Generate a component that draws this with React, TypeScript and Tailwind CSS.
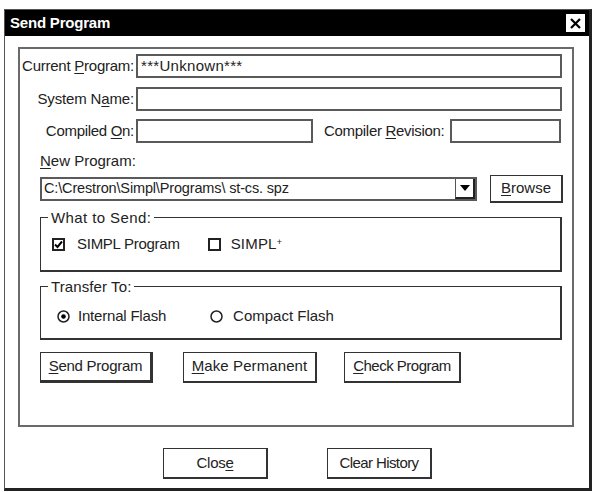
import React from "react";

const font = { fontFamily: '"Liberation Sans", Arial, sans-serif' };

function U({ children }: { children: React.ReactNode }) {
  return <span className="underline underline-offset-2">{children}</span>;
}

function Field({ className, children }: { className: string; children?: React.ReactNode }) {
  return (
    <div className={`h-[24px] border-2 border-[#5a5a5a] bg-white flex items-center px-[3px] text-[15px] text-[#222] ${className}`}>
      {children}
    </div>
  );
}

function Btn({ className, children, def }: { className: string; children: React.ReactNode; def?: boolean }) {
  return (
    <div
      className={`flex items-center justify-center bg-white text-[15px] text-[#222] border border-[#333] ${
        def ? "border-r-[3px] border-b-[3px]" : "border-r-2 border-b-2"
      } ${className}`}
    >
      {children}
    </div>
  );
}

export default function App() {
  return (
    <div className="w-[595px] h-[492px] bg-white overflow-hidden" style={font}>
      <div className="ml-[4px] mt-[9px] w-[588px] h-[482px] border border-[#555] border-r-[3px] border-r-[#222] border-b-[3px] border-b-[#222] flex flex-col">
        {/* title bar */}
        <div className="h-[26px] bg-black flex items-center justify-between pl-[5px] pr-[4px]">
          <span className="text-white font-bold text-[15px] tracking-[-0.2px]">Send Program</span>
          <div className="w-[19px] h-[18px] bg-white flex items-center justify-center">
            <svg width="11" height="11" viewBox="0 0 11 11">
              <path d="M1 1 L10 10 M10 1 L1 10" stroke="#000" strokeWidth="2.2" />
            </svg>
          </div>
        </div>

        {/* body */}
        <div className="flex flex-col pl-[13px] pt-[11px]">
          <div className="w-[556px] h-[380px] border-2 border-[#6a6a6a] flex flex-col pt-[5px]">
            {/* row 1 */}
            <div className="flex items-center h-[24px]">
              <div className="w-[114px] text-right text-[15px] text-[#222] tracking-[-0.25px] whitespace-nowrap">
                Current <U>P</U>rogram:
              </div>
              <Field className="ml-[2px] w-[426px]">
                <span className="tracking-[0.3px]">***Unknown***</span>
              </Field>
            </div>
            {/* row 2 */}
            <div className="flex items-center h-[24px] mt-[9px]">
              <div className="w-[114px] text-right text-[15px] text-[#222] tracking-[-0.15px] whitespace-nowrap">
                System N<U>a</U>me:
              </div>
              <Field className="ml-[2px] w-[426px]" />
            </div>
            {/* row 3 */}
            <div className="flex items-center h-[24px] mt-[8px]">
              <div className="w-[114px] text-right text-[15px] text-[#222] tracking-[-0.3px] whitespace-nowrap">
                Compiled <U>O</U>n:
              </div>
              <Field className="ml-[2px] w-[177px]" />
              <div className="ml-[11px] text-[15px] text-[#222] tracking-[-0.3px] whitespace-nowrap">
                Compiler <U>R</U>evision:
              </div>
              <Field className="ml-[5px] w-[111px]" />
            </div>

            {/* new program */}
            <div className="ml-[20px] mt-[7px] text-[15px] text-[#222]">
              <U>N</U>ew Program:
            </div>
            <div className="flex items-center ml-[20px] mt-[2px]">
              <div className="w-[437px] h-[24px] border-2 border-[#5a5a5a] flex items-center">
                <span className="flex-1 pl-[2px] text-[14.5px] text-[#222] tracking-[-0.15px] whitespace-nowrap overflow-hidden">
                  C:\Crestron\Simpl\Programs\ st-cs. spz
                </span>
                <div className="w-[20px] h-[20px] border-l border-[#555] border-r-2 border-b-2 border-r-[#222] border-b-[#222] flex items-center justify-center">
                  <svg width="10" height="6" viewBox="0 0 10 6">
                    <path d="M0 0 L10 0 L5 6 Z" fill="#000" />
                  </svg>
                </div>
              </div>
              <Btn className="ml-[13px] w-[73px] h-[28px]">
                <span>
                  <U>B</U>rowse
                </span>
              </Btn>
            </div>

            {/* What to send */}
            <div className="relative ml-[20px] mt-[14px] w-[522px] h-[55px] border border-[#333] border-r-2 border-b-2 flex items-center">
              <span className="absolute left-[7px] top-[-11px] bg-white px-[3px] text-[15px] text-[#222] tracking-[0.4px] whitespace-nowrap">
                What to Send:
              </span>
              <div className="flex items-center ml-[11px] mt-[2px]">
                <div className="w-[13px] h-[13px] border-2 border-[#222] flex items-center justify-center">
                  <svg width="9" height="9" viewBox="0 0 9 9">
                    <path d="M1 4.5 L3.5 7 L8 1.5" stroke="#000" strokeWidth="2" fill="none" />
                  </svg>
                </div>
                <span className="ml-[12px] text-[15px] text-[#222] tracking-[-0.27px] whitespace-nowrap">SIMPL Program</span>
                <div className="ml-[28px] w-[13px] h-[13px] border-2 border-[#222]" />
                <span className="ml-[10px] text-[15px] text-[#222] tracking-[0.2px]">
                  SIMPL<sup className="text-[9px]">+</sup>
                </span>
              </div>
            </div>

            {/* Transfer To */}
            <div className="relative ml-[20px] mt-[14px] w-[522px] h-[54px] border border-[#333] border-r-2 border-b-2 flex items-center">
              <span className="absolute left-[7px] top-[-11px] bg-white px-[3px] text-[15px] text-[#222] tracking-[0.1px] whitespace-nowrap">
                Transfer To:
              </span>
              <div className="flex items-center ml-[16px] mt-[8px]">
                <svg width="13" height="13" viewBox="0 0 13 13">
                  <circle cx="6.5" cy="6.5" r="5.5" stroke="#222" strokeWidth="1.5" fill="none" />
                  <circle cx="6.5" cy="6.5" r="2.3" fill="#000" />
                </svg>
                <span className="ml-[8px] text-[15px] text-[#222] tracking-[-0.2px] whitespace-nowrap">Internal Flash</span>
                <svg className="ml-[44px]" width="13" height="13" viewBox="0 0 13 13">
                  <circle cx="6.5" cy="6.5" r="5.5" stroke="#222" strokeWidth="1.5" fill="none" />
                </svg>
                <span className="ml-[10px] text-[15px] text-[#222] whitespace-nowrap">Compact Flash</span>
              </div>
            </div>

            {/* action buttons */}
            <div className="flex items-center ml-[20px] mt-[12px]">
              <Btn def className="w-[113px] h-[31px] tracking-[-0.25px] whitespace-nowrap">
                <span>
                  <U>S</U>end Program
                </span>
              </Btn>
              <Btn className="ml-[30px] w-[134px] h-[31px] tracking-[0.1px] whitespace-nowrap">
                <span>
                  <U>M</U>ake Permanent
                </span>
              </Btn>
              <Btn className="ml-[27px] w-[117px] h-[31px] tracking-[-0.5px] whitespace-nowrap">
                <span>
                  <U>C</U>heck Program
                </span>
              </Btn>
            </div>
          </div>

          {/* bottom buttons */}
          <div className="flex items-center mt-[21px] ml-[145px]">
            <Btn className="w-[105px] h-[31px] tracking-[-0.3px]">
              <span>
                Clos<U>e</U>
              </span>
            </Btn>
            <Btn className="ml-[59px] w-[105px] h-[31px] tracking-[-0.6px] whitespace-nowrap">
              <span>Clear History</span>
            </Btn>
          </div>
        </div>
      </div>
    </div>
  );
}
